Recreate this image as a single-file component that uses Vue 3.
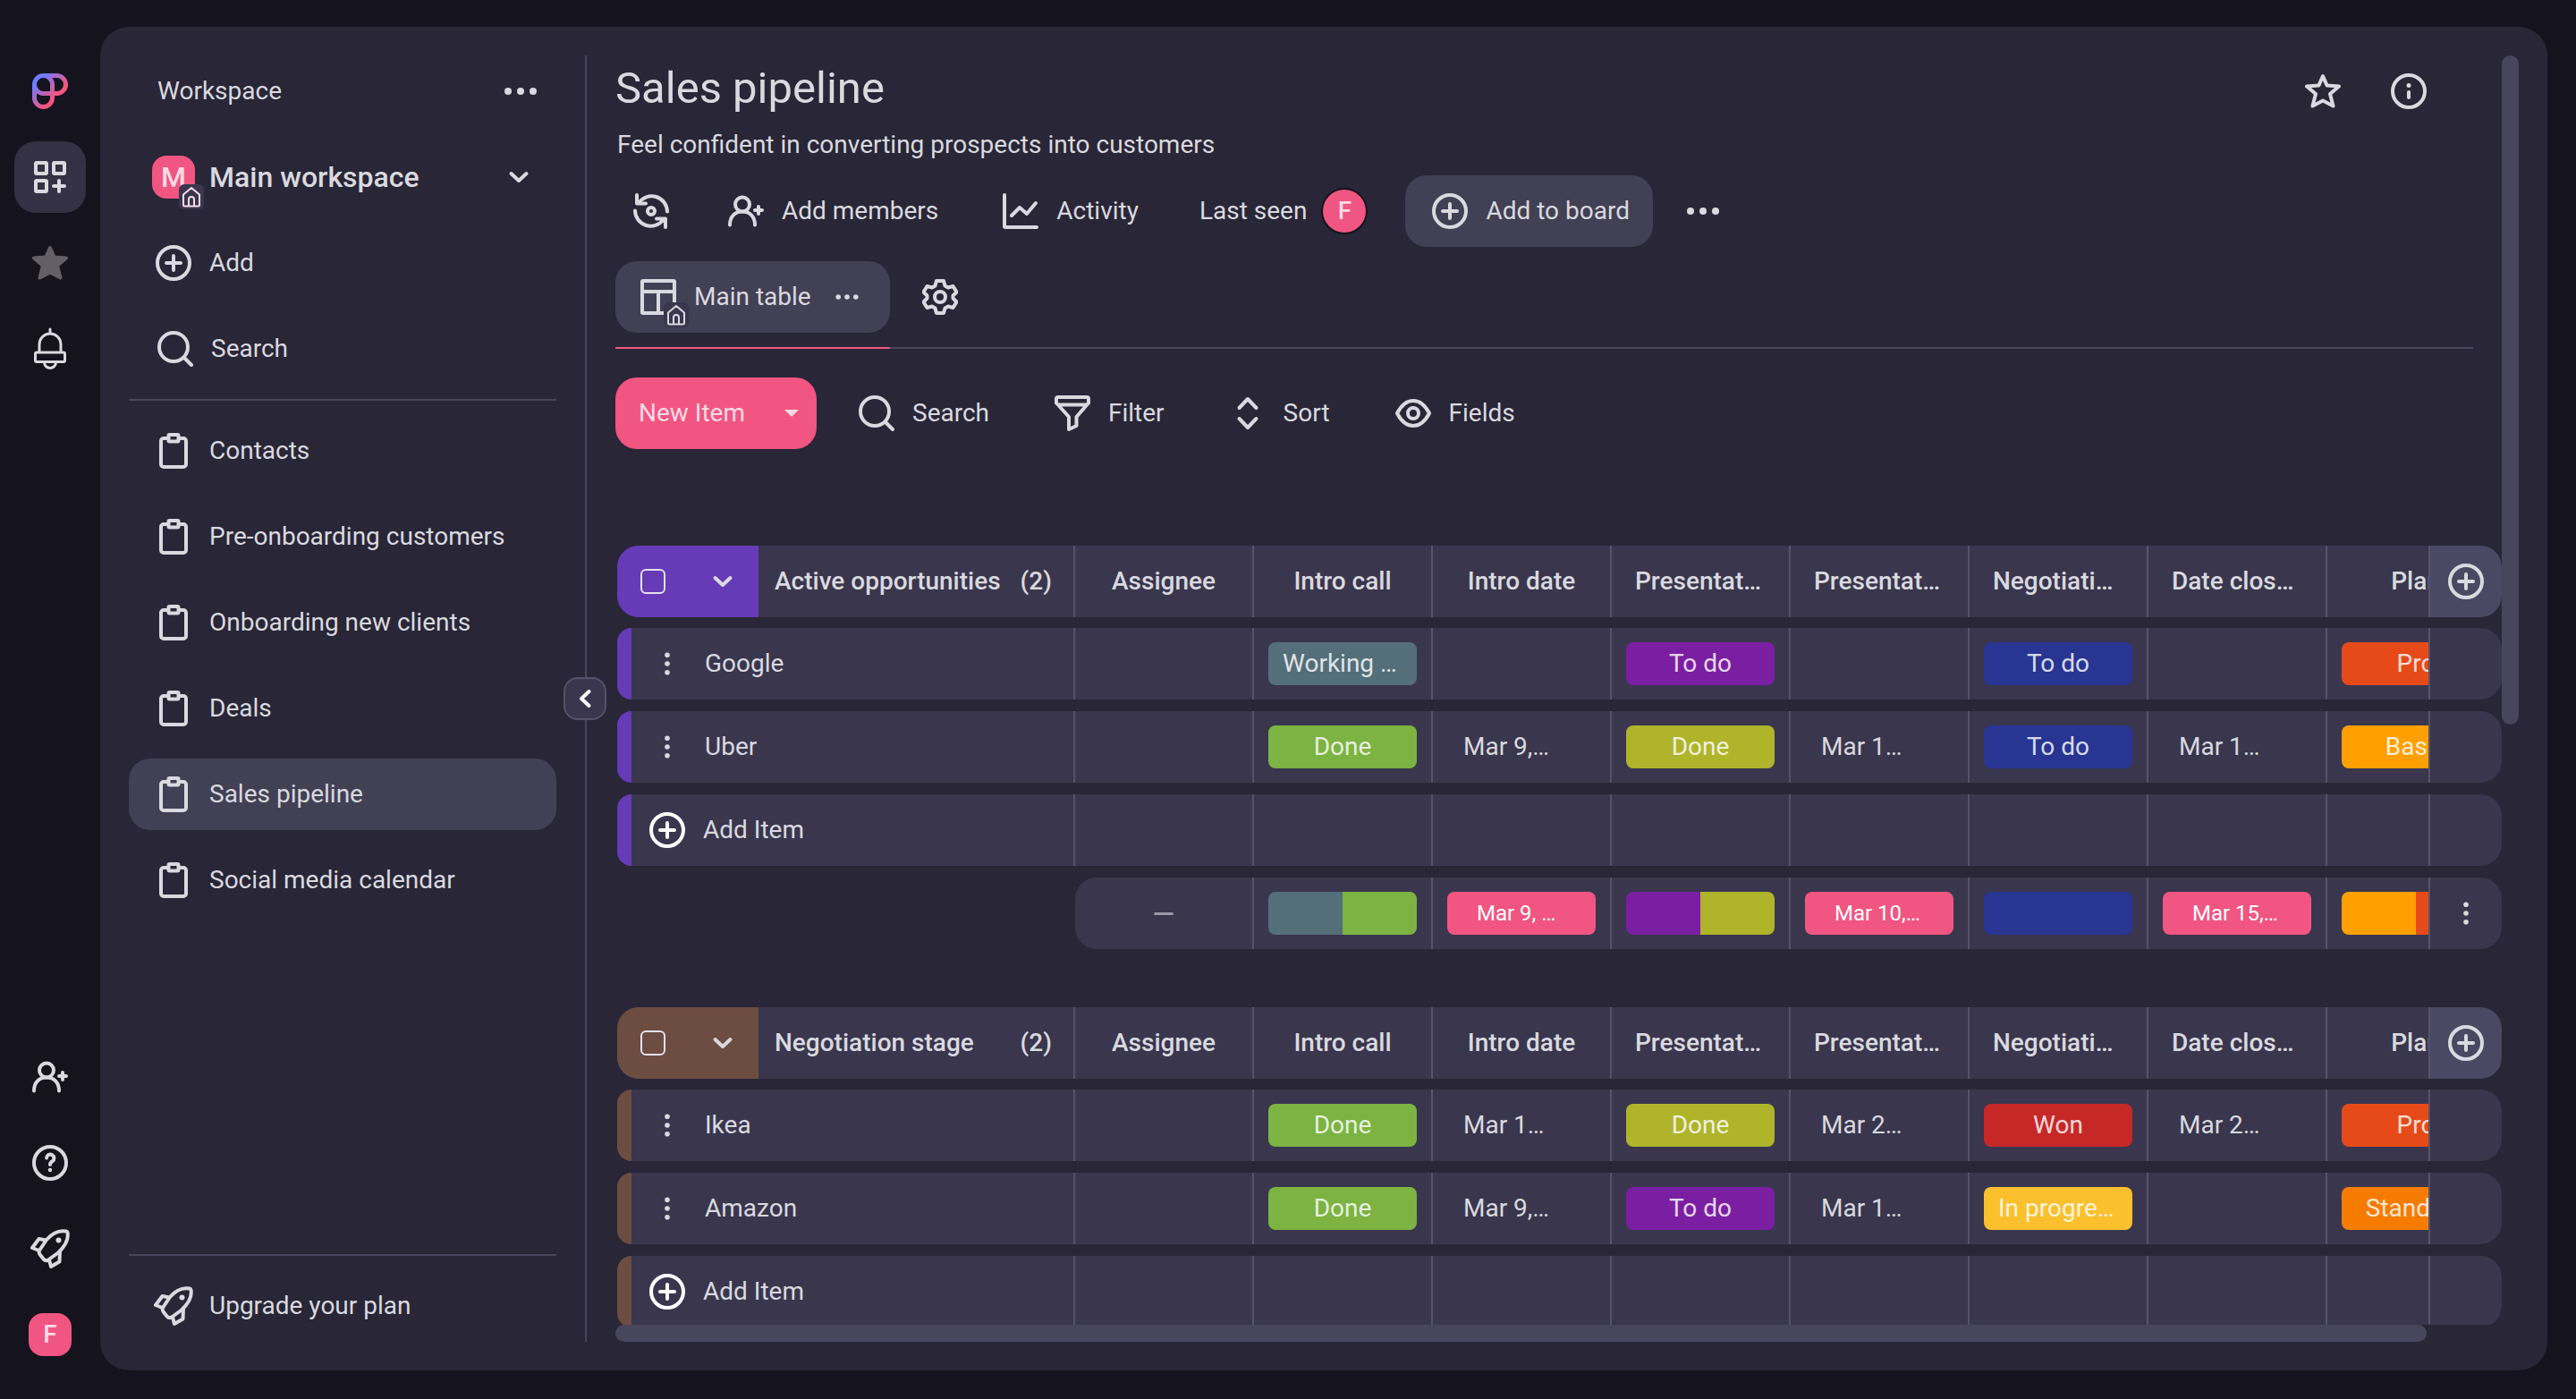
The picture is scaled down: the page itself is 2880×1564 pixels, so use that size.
<script setup>
import { ref } from "vue"

const boards = ["Contacts", "Pre-onboarding customers", "Onboarding new clients", "Deals", "Sales pipeline", "Social media calendar"]
const activeBoard = ref("Sales pipeline")
const sidebarOpen = ref(true)

const colors = {
  slate: "#546e7a",
  green: "#7cb342",
  purple: "#7b1fa2",
  lime: "#afb42b",
  indigo: "#283593",
  red: "#c62828",
  yellow: "#fbc02d",
  deepOrange: "#e64a19",
  amber: "#ffa000",
  orange: "#f57c00"
}

const columns = ["Assignee", "Intro call", "Intro date", "Presentation", "Presentation", "Negotiation", "Date closed", "Plan"]

const pill = (text, color) => ({ text, color: colors[color] })
const date = (text) => ({ date: text })

const groups = ref([
  {
    name: "Active opportunities",
    color: "#673ab7",
    checked: false,
    items: [
      {
        name: "Google",
        cells: [null, pill("Working on it", "slate"), null, pill("To do", "purple"), null, pill("To do", "indigo"), null, pill("Pro", "deepOrange")]
      },
      {
        name: "Uber",
        cells: [null, pill("Done", "green"), date("Mar 9, 2023"), pill("Done", "lime"), date("Mar 10, 2023"), pill("To do", "indigo"), date("Mar 15, 2023"), pill("Basic", "amber")]
      }
    ],
    summary: [
      { dash: true },
      { bar: ["slate", "green"] },
      { range: "Mar 9, 2023" },
      { bar: ["purple", "lime"] },
      { range: "Mar 10, 2023" },
      { bar: ["indigo"] },
      { range: "Mar 15, 2023" },
      { bar: ["amber", "deepOrange"] }
    ]
  },
  {
    name: "Negotiation stage",
    color: "#6d4c41",
    checked: false,
    items: [
      {
        name: "Ikea",
        cells: [null, pill("Done", "green"), date("Mar 13, 2023"), pill("Done", "lime"), date("Mar 20, 2023"), pill("Won", "red"), date("Mar 22, 2023"), pill("Pro", "deepOrange")]
      },
      {
        name: "Amazon",
        cells: [null, pill("Done", "green"), date("Mar 9, 2023"), pill("To do", "purple"), date("Mar 16, 2023"), pill("In progress", "yellow"), null, pill("Standard", "orange")]
      }
    ]
  }
])
</script>

<template>
  <div class="app">
    <svg class="sprite" aria-hidden="true">
      <defs>
        <linearGradient id="logo-gradient" x1="0" y1="0" x2="1" y2="1">
          <stop offset="0.15" stop-color="#6f7bff" />
          <stop offset="0.65" stop-color="#f15582" />
        </linearGradient>
        <symbol id="i-boards" viewBox="0 0 40 40">
          <rect x="4" y="4" width="12" height="12" rx="1" />
          <rect x="24" y="4" width="12" height="12" rx="1" />
          <rect x="4" y="24" width="12" height="12" rx="1" />
          <path d="M30 24v12M24 30h12" />
        </symbol>
        <symbol id="i-star" viewBox="0 0 40 40">
          <path d="M20 3l4.500 10.400 13.500 1.100-10 8.500 3.500 13.500-11.500-6-11.500 6L12 23 2 14.500l13.500-1.100z" />
        </symbol>
        <symbol id="i-bell" viewBox="0 0 40 48">
          <path d="M20 2v5M8 27V19a12 12 0 0 1 24 0v8M5 28h30a1.500 1.500 0 0 1 1.500 1.500V37a1.500 1.500 0 0 1-1.500 1.500H5A1.500 1.500 0 0 1 3.500 37v-7.500A1.500 1.500 0 0 1 5 28zM13.500 39a6.500 6.500 0 0 0 13 0" />
        </symbol>
        <symbol id="i-member" viewBox="0 0 40 40">
          <circle cx="16" cy="12.500" r="8" />
          <path d="M2 35.500C2 26 8 20.500 16 20.500S30 26 30 35.500M34 15v8M30 19h8" />
        </symbol>
        <symbol id="i-help" viewBox="0 0 40 40">
          <circle cx="20" cy="20" r="18" />
          <path d="M16 14.500a4.200 4.200 0 1 1 6.500 3.800c-1.700 1-2.500 1.700-2.500 3.700" />
          <circle class="solid" cx="20" cy="28" r="2.200" />
        </symbol>
        <symbol id="i-rocket" viewBox="0 0 44 44">
          <path d="M40 2.500C32 1 24 5 18 12L10 24c-1 2-.5 3 1 5l4 5c1.500 1.500 3 1.500 5 .500l11-8C39 19 43 12 41.500 4a2 2 0 0 0-1.500-1.500zM17.500 12.500L9.500 11 2 21l7.500 3M21 34.500L23 42l9.500-5.500L33 25" />
          <circle class="solid" cx="31.500" cy="12.500" r="3" />
        </symbol>
        <symbol id="i-plus" viewBox="0 0 40 40">
          <circle cx="20" cy="20" r="18" />
          <path d="M20 12v16M12 20h16" />
        </symbol>
        <symbol id="i-search" viewBox="0 0 40 40">
          <circle cx="18" cy="18" r="16" />
          <path d="M30 30l8 8" />
        </symbol>
        <symbol id="i-clipboard" viewBox="0 0 40 40">
          <path d="M14 6H9a3 3 0 0 0-3 3v26a3 3 0 0 0 3 3h22a3 3 0 0 0 3-3V9a3 3 0 0 0-3-3h-5" />
          <rect x="14.500" y="2" width="11" height="7.500" rx="1" />
        </symbol>
        <symbol id="i-dots" viewBox="0 0 40 40">
          <circle class="solid" cx="6" cy="20" r="4" />
          <circle class="solid" cx="20" cy="20" r="4" />
          <circle class="solid" cx="34" cy="20" r="4" />
        </symbol>
        <symbol id="i-kebab" viewBox="0 0 40 40">
          <circle class="solid" cx="20" cy="6" r="4" />
          <circle class="solid" cx="20" cy="20" r="4" />
          <circle class="solid" cx="20" cy="34" r="4" />
        </symbol>
        <symbol id="i-down" viewBox="0 0 40 40">
          <path d="M11.500 16L20 24l8.500-8" />
        </symbol>
        <symbol id="i-left" viewBox="0 0 40 40">
          <path d="M24.500 12L16 20l8.500 8" />
        </symbol>
        <symbol id="i-home" viewBox="0 0 28 28">
          <path d="M5 11.500L14 4l9 7.500V23a1.500 1.500 0 0 1-1.500 1.500h-15A1.500 1.500 0 0 1 5 23zM11 24v-7a3 3 0 0 1 6 0v7" />
        </symbol>
        <symbol id="i-sync" viewBox="0 0 40 40">
          <path d="M4 2v9.500h10M6 11A17.500 17.500 0 0 1 38 20.500M36 38v-9.500H26M34 29A17.500 17.500 0 0 1 2 19.500" />
          <circle cx="20" cy="20" r="4" />
        </symbol>
        <symbol id="i-chart" viewBox="0 0 40 40">
          <path d="M2 2v35a1 1 0 0 0 1 1h35M10 25l9-9 8 7 10-12" />
        </symbol>
        <symbol id="i-info" viewBox="0 0 40 40">
          <circle cx="20" cy="20" r="18" />
          <path d="M20 21v6" />
          <circle class="solid" cx="20" cy="13.500" r="2.500" />
        </symbol>
        <symbol id="i-table" viewBox="0 0 40 40">
          <path d="M3 2h34a1 1 0 0 1 1 1v34a1 1 0 0 1-1 1H3a1 1 0 0 1-1-1V3a1 1 0 0 1 1-1zM2 14h36M20 14v24" />
        </symbol>
        <symbol id="i-gear" viewBox="0 0 40 40">
          <path d="M16 2h8l1.500 5.500 3.500 2 5.500-1.500 4 6.500-4 4v3l4 4-4 6.500-5.500-1.500-3.500 2L24 38h-8l-1.500-5.500-3.500-2L5.500 32l-4-6.500 4-4v-3l-4-4 4-6.500L11 9.500l3.500-2z" />
          <circle cx="20" cy="20" r="6" />
        </symbol>
        <symbol id="i-filter" viewBox="0 0 40 40">
          <path d="M4 2h32a2 2 0 0 1 2 2v4.500L24.500 24v10L16 38V24L2 8.500V4a2 2 0 0 1 2-2zM4 10.500h32" />
        </symbol>
        <symbol id="i-sort" viewBox="0 0 40 40">
          <path d="M10.500 14L20 4l9.500 10M10.500 26L20 36l9.500-10" />
        </symbol>
        <symbol id="i-eye" viewBox="0 0 40 40">
          <path d="M2 20C7 10.500 13 6 20 6s13 4.500 18 14c-5 9.500-11 14-18 14S7 29.500 2 20z" />
          <circle cx="20" cy="20" r="6" />
        </symbol>
      </defs>
    </svg>

    <nav class="rail">
      <a href="#" class="rail-item" aria-label="Home">
        <svg class="icon" viewBox="0 0 40 40">
          <path class="logo" d="M12.500 2.500a10 10 0 0 1 10 10v15a10 10 0 0 1-20 0v-15a10 10 0 0 1 10-10h15a10 10 0 0 1 0 20h-15a10 10 0 0 1-10-10" />
        </svg>
      </a>
      <button class="rail-item active" aria-label="Workspaces"><svg class="icon"><use href="#i-boards" /></svg></button>
      <button class="rail-item" aria-label="Favorites"><svg class="icon favorite"><use href="#i-star" /></svg></button>
      <button class="rail-item" aria-label="Notifications"><svg class="icon bell"><use href="#i-bell" /></svg></button>
      <span class="spacer"></span>
      <button class="rail-item" aria-label="Invite"><svg class="icon"><use href="#i-member" /></svg></button>
      <button class="rail-item" aria-label="Help"><svg class="icon"><use href="#i-help" /></svg></button>
      <button class="rail-item" aria-label="Upgrade"><svg class="icon rocket"><use href="#i-rocket" /></svg></button>
      <button class="rail-item" aria-label="Profile"><span class="avatar">F</span></button>
    </nav>

    <div class="panel">
      <aside class="sidebar">
        <div class="side-row side-title">
          <span>Workspace</span>
          <button class="icon-btn" aria-label="Workspace options"><svg class="icon"><use href="#i-dots" /></svg></button>
        </div>
        <button class="side-row workspace">
          <span class="avatar">M<svg class="icon home"><use href="#i-home" /></svg></span>
          <span class="workspace-name">Main workspace</span>
          <svg class="icon workspace-arrow"><use href="#i-down" /></svg>
        </button>
        <button class="side-row"><svg class="icon"><use href="#i-plus" /></svg>Add</button>
        <button class="side-row search"><svg class="icon"><use href="#i-search" /></svg>Search</button>
        <hr>
        <a
          v-for="board in boards"
          :key="board"
          href="#"
          class="side-row"
          :class="{ active: board === activeBoard }"
          @click.prevent="activeBoard = board"
        >
          <svg class="icon"><use href="#i-clipboard" /></svg>{{ board }}
        </a>
        <span class="spacer"></span>
        <hr>
        <a href="#" class="side-row upgrade"><svg class="icon rocket"><use href="#i-rocket" /></svg>Upgrade your plan</a>
        <button class="collapse" aria-label="Toggle sidebar" @click="sidebarOpen = !sidebarOpen">
          <svg class="icon"><use href="#i-left" /></svg>
        </button>
      </aside>

      <main class="main">
        <div class="content">
          <header class="header">
            <div>
              <h1>Sales pipeline</h1>
              <p>Feel confident in converting prospects into customers</p>
            </div>
            <div class="header-actions">
              <button class="icon-btn" aria-label="Favorite"><svg class="icon"><use href="#i-star" /></svg></button>
              <button class="icon-btn" aria-label="Info"><svg class="icon"><use href="#i-info" /></svg></button>
            </div>
          </header>

          <div class="toolbar">
            <button class="icon-btn" aria-label="Sync"><svg class="icon"><use href="#i-sync" /></svg></button>
            <button class="btn"><svg class="icon"><use href="#i-member" /></svg>Add members</button>
            <button class="btn"><svg class="icon"><use href="#i-chart" /></svg>Activity</button>
            <button class="btn last-seen">Last seen<span class="avatar round">F</span></button>
            <button class="btn filled"><svg class="icon"><use href="#i-plus" /></svg>Add to board</button>
            <button class="icon-btn dots" aria-label="More"><svg class="icon"><use href="#i-dots" /></svg></button>
          </div>

          <div class="tabs">
            <div class="tab">
              <button class="btn filled">
                <span class="tab-icon">
                  <svg class="icon"><use href="#i-table" /></svg>
                  <svg class="icon home"><use href="#i-home" /></svg>
                </span>
                Main table
                <svg class="icon small"><use href="#i-dots" /></svg>
              </button>
            </div>
            <button class="icon-btn" aria-label="View settings"><svg class="icon"><use href="#i-gear" /></svg></button>
          </div>

          <div class="toolbar actions">
            <button class="btn new-item">New Item<span class="caret"></span></button>
            <button class="btn"><svg class="icon"><use href="#i-search" /></svg>Search</button>
            <button class="btn"><svg class="icon"><use href="#i-filter" /></svg>Filter</button>
            <button class="btn"><svg class="icon"><use href="#i-sort" /></svg>Sort</button>
            <button class="btn"><svg class="icon"><use href="#i-eye" /></svg>Fields</button>
          </div>

          <div class="groups">
            <table v-for="group in groups" :key="group.name">
              <thead>
                <tr>
                  <th class="first">
                    <div class="group-tools" :style="{ backgroundColor: group.color }">
                      <input type="checkbox" v-model="group.checked" :aria-label="group.name">
                      <svg class="icon"><use href="#i-down" /></svg>
                    </div>
                    <span class="group-name">{{ group.name }}</span>
                    <span class="count">({{ group.items.length }})</span>
                  </th>
                  <th v-for="(column, i) in columns" :key="i"><div class="inner column-name"><span>{{ column }}</span></div></th>
                  <th class="last"><button aria-label="Add column"><svg class="icon"><use href="#i-plus" /></svg></button></th>
                </tr>
              </thead>
              <tbody>
                <tr v-for="item in group.items" :key="item.name">
                  <td class="first">
                    <span class="stripe" :style="{ backgroundColor: group.color }"></span>
                    <button class="row-menu" aria-label="Item menu"><svg class="icon small"><use href="#i-kebab" /></svg></button>
                    {{ item.name }}
                  </td>
                  <td v-for="(cell, i) in item.cells" :key="i">
                    <div class="inner" v-if="cell">
                      <span v-if="cell.color" class="pill" :style="{ backgroundColor: cell.color }">{{ cell.text }}</span>
                      <span v-else class="date">{{ cell.date }}</span>
                    </div>
                  </td>
                  <td class="last"></td>
                </tr>
                <tr>
                  <td class="first">
                    <span class="stripe" :style="{ backgroundColor: group.color }"></span>
                    <button class="add-item"><svg class="icon"><use href="#i-plus" /></svg>Add Item</button>
                  </td>
                  <td v-for="(column, i) in columns" :key="i"></td>
                  <td class="last"></td>
                </tr>
              </tbody>
              <tfoot v-if="group.summary">
                <tr>
                  <td class="first blank"></td>
                  <td v-for="(cell, i) in group.summary" :key="i">
                    <div class="inner">
                      <span v-if="cell.dash" class="dash"></span>
                      <span v-else-if="cell.bar" class="pill bar">
                        <i v-for="part in cell.bar" :key="part" :style="{ backgroundColor: colors[part] }"></i>
                      </span>
                      <span v-else class="pill range">{{ cell.range }}</span>
                    </div>
                  </td>
                  <td class="last"><button aria-label="Summary menu"><svg class="icon small"><use href="#i-kebab" /></svg></button></td>
                </tr>
              </tfoot>
            </table>
          </div>
          <div class="scroll-x"></div>
        </div>
        <div class="scroll-y"></div>
      </main>
    </div>
  </div>
</template>

<style>
body {
  margin: 0;
  background-color: #15131d;
}
</style>

<style scoped>
* {
  box-sizing: border-box;
}

.app {
  display: flex;
  height: 100vh;
  padding: 30px 32px 32px 0;
  background-color: #15131d;
  color: #dad9df;
  font-family: Roboto, sans-serif;
  font-size: 28px;
  line-height: 40px;
}

.sprite {
  position: absolute;
  width: 0;
  height: 0;
}

button,
a {
  display: flex;
  align-items: center;
  padding: 0;
  border: none;
  background: none;
  color: inherit;
  font: inherit;
  text-decoration: none;
  white-space: nowrap;
  cursor: pointer;
}

.icon {
  flex: none;
  width: 40px;
  height: 40px;
  fill: none;
  stroke: currentColor;
  stroke-width: 4;
  stroke-linecap: round;
  stroke-linejoin: round;
}

.icon.small {
  width: 28px;
  height: 28px;
}

.icon.rocket {
  width: 44px;
  height: 44px;
}

.icon.bell {
  height: 48px;
  stroke-width: 3;
}

.icon.favorite {
  color: #635f69;
  fill: currentColor;
}

.icon.home {
  position: absolute;
  right: -10px;
  bottom: -12px;
  width: 28px;
  height: 28px;
  border-radius: 6px;
  background-color: #39364e;
  stroke-width: 2;
}

.solid {
  fill: currentColor;
  stroke: none;
}

.logo {
  stroke: url(#logo-gradient);
  stroke-width: 5;
}

.spacer {
  flex: 1;
}

.avatar {
  position: relative;
  display: grid;
  place-items: center;
  width: 48px;
  height: 48px;
  border-radius: 16px;
  background-color: #f15582;
  color: #f9dbe5;
  font-weight: 500;
}

.avatar.round {
  border-radius: 50%;
  box-shadow: 0 0 0 2px #15131d;
}

.icon-btn {
  justify-content: center;
  width: 80px;
  height: 80px;
}

/* rail */
.rail {
  display: flex;
  flex-direction: column;
  align-items: center;
  gap: 16px;
  width: 112px;
  padding-top: 32px;
}

.rail-item {
  justify-content: center;
  width: 80px;
  height: 80px;
  border-radius: 24px;
}

.rail-item.active {
  background-color: #343144;
}

.rail .spacer {
  margin: -8px 0;
}

.panel {
  display: flex;
  flex: 1;
  min-width: 0;
  padding: 32px;
  border-radius: 32px;
  background-color: #282637;
}

/* sidebar */
.sidebar {
  position: relative;
  display: flex;
  flex-direction: column;
  gap: 16px;
  flex: none;
  width: 512px;
  padding-right: 32px;
  border-right: 2px solid #48465d;
}

.sidebar .spacer {
  margin: -8px 0;
}

.sidebar hr {
  width: 100%;
  height: 2px;
  margin: 0;
  border: none;
  background-color: #48465d;
}

.side-row {
  gap: 20px;
  height: 80px;
  padding: 0 30px;
  border-radius: 24px;
}

.side-row.search {
  padding: 0 32px;
}

.side-row.active,
.btn.filled {
  background-color: #424055;
}

.side-title {
  display: flex;
  align-items: center;
  justify-content: space-between;
  padding: 0 0 0 32px;
}

.workspace {
  gap: 16px;
  padding: 0 22px 0 26px;
  font-size: 32px;
  font-weight: 500;
}

.workspace .avatar {
  font-size: 32px;
}

.workspace-arrow {
  margin-left: auto;
}

.upgrade {
  gap: 18px;
  padding: 0 28px;
}

.collapse {
  position: absolute;
  top: 50%;
  right: -24px;
  justify-content: center;
  width: 48px;
  height: 48px;
  margin-top: -24px;
  border: 2px solid #55526b;
  border-radius: 16px;
  background-color: #39364e;
  color: #fff;
}

/* main */
.main {
  display: flex;
  flex: 1;
  min-width: 0;
  padding-left: 32px;
}

.content {
  display: flex;
  flex: 1;
  flex-direction: column;
  min-width: 0;
}

.header {
  display: flex;
  justify-content: space-between;
  padding-right: 32px;
}

.header-actions {
  display: flex;
  gap: 16px;
  padding-right: 32px;
}

h1 {
  margin: 0;
  font-size: 49px;
  font-weight: 400;
  line-height: 74px;
}

.header p {
  margin: 6px 0 14px 2px;
}

.toolbar {
  display: flex;
  gap: 16px;
}

.toolbar.actions {
  gap: 17px;
}

.btn {
  gap: 20px;
  height: 80px;
  padding: 0 26px 0 30px;
  border-radius: 24px;
}

.btn.last-seen {
  gap: 18px;
  padding: 0 28px 0 26px;
}

.tabs {
  display: flex;
  gap: 16px;
  margin: 16px 32px 32px 0;
  border-bottom: 2px solid #48465d;
}

.tab {
  padding-bottom: 16px;
  margin-bottom: -2px;
  border-bottom: 2px solid #f15582;
}

.tab .btn {
  padding: 0 28px;
}

.tab .small {
  margin: 0 6px;
}

.tab-icon {
  position: relative;
  display: flex;
}

.tab-icon .home {
  right: -14px;
  bottom: -14px;
}

.btn.new-item {
  gap: 44px;
  padding: 0 20px 0 26px;
  background-color: #f15582;
  color: #f9dbe5;
}

.caret {
  border: 8px solid transparent;
  border-top-color: currentColor;
  border-bottom: none;
}

.groups {
  display: flex;
  flex: 1;
  flex-direction: column;
  gap: 65px;
  min-height: 0;
  margin-top: 108px;
  padding-left: 2px;
  overflow: hidden;
}

.scroll-x {
  flex: none;
  width: 96%;
  height: 19px;
  border-radius: 10px;
  background-color: #48465d;
}

.scroll-y {
  flex: none;
  width: 19px;
  height: 52%;
  border-radius: 10px;
  background-color: #48465d;
}

/* table */
table {
  display: flex;
  flex: none;
  flex-direction: column;
  gap: 13px;
}

thead {
  display: block;
  margin-bottom: -1px;
}

tbody {
  display: grid;
  gap: 13px;
}

tfoot {
  display: block;
}

tr {
  display: grid;
  grid-template-columns: 512px repeat(7, 200px) minmax(0, 1fr) 82px;
  height: 80px;
}

th,
td {
  padding: 0;
  border-right: 2px solid #55526b;
  background-color: #39364e;
  overflow: hidden;
  text-align: left;
}

th {
  font-weight: 500;
}

th:nth-last-child(2),
td:nth-last-child(2) {
  border-right: none;
}

.first {
  display: flex;
  align-items: center;
  border-radius: 16px 0 0 16px;
}

th.first {
  border-radius: 24px 0 0 24px;
}

.last {
  border-right: none;
  border-left: 2px solid #55526b;
  border-radius: 0 24px 24px 0;
}

.last button {
  justify-content: center;
  width: 100%;
  height: 100%;
}

th.last {
  background-color: #4a4863;
}

.group-tools {
  display: flex;
  align-items: center;
  gap: 44px;
  width: 158px;
  height: 80px;
  padding-left: 26px;
}

.group-tools input {
  appearance: none;
  width: 28px;
  height: 28px;
  margin: 0;
  border: 2px solid #e6e1f0;
  border-radius: 6px;
}

.group-name {
  flex: 1;
  padding-left: 18px;
}

.count {
  padding-right: 24px;
}

.inner {
  display: flex;
  align-items: center;
  justify-content: center;
  width: 198px;
  height: 80px;
  padding: 0 16px;
}

.column-name {
  padding: 0 26px;
}

.column-name span,
.pill,
.date {
  overflow: hidden;
  text-overflow: ellipsis;
  white-space: nowrap;
}

.pill {
  width: 166px;
  height: 48px;
  padding: 0 16px;
  border-radius: 8px;
  color: rgba(255, 255, 255, 0.84);
  line-height: 48px;
  text-align: center;
}

.date {
  width: 166px;
  padding: 0 48px 0 18px;
}

.pill.bar {
  display: flex;
  padding: 0;
}

.bar i {
  flex: 1;
}

.pill.range {
  padding: 0 33px;
  background-color: #f15582;
  color: #fff;
  font-size: 24px;
  text-align: left;
}

.dash {
  width: 22px;
  height: 3px;
  border-radius: 2px;
  background-color: #9a98a6;
}

.stripe {
  width: 16px;
  height: 80px;
}

.row-menu {
  margin: 0 28px 0 26px;
}

.add-item {
  gap: 20px;
  margin-left: 20px;
}

.add-item .icon {
  color: #fff;
}

td.blank {
  border-color: transparent;
  background: none;
}

.blank + td {
  border-radius: 24px 0 0 24px;
}
</style>
